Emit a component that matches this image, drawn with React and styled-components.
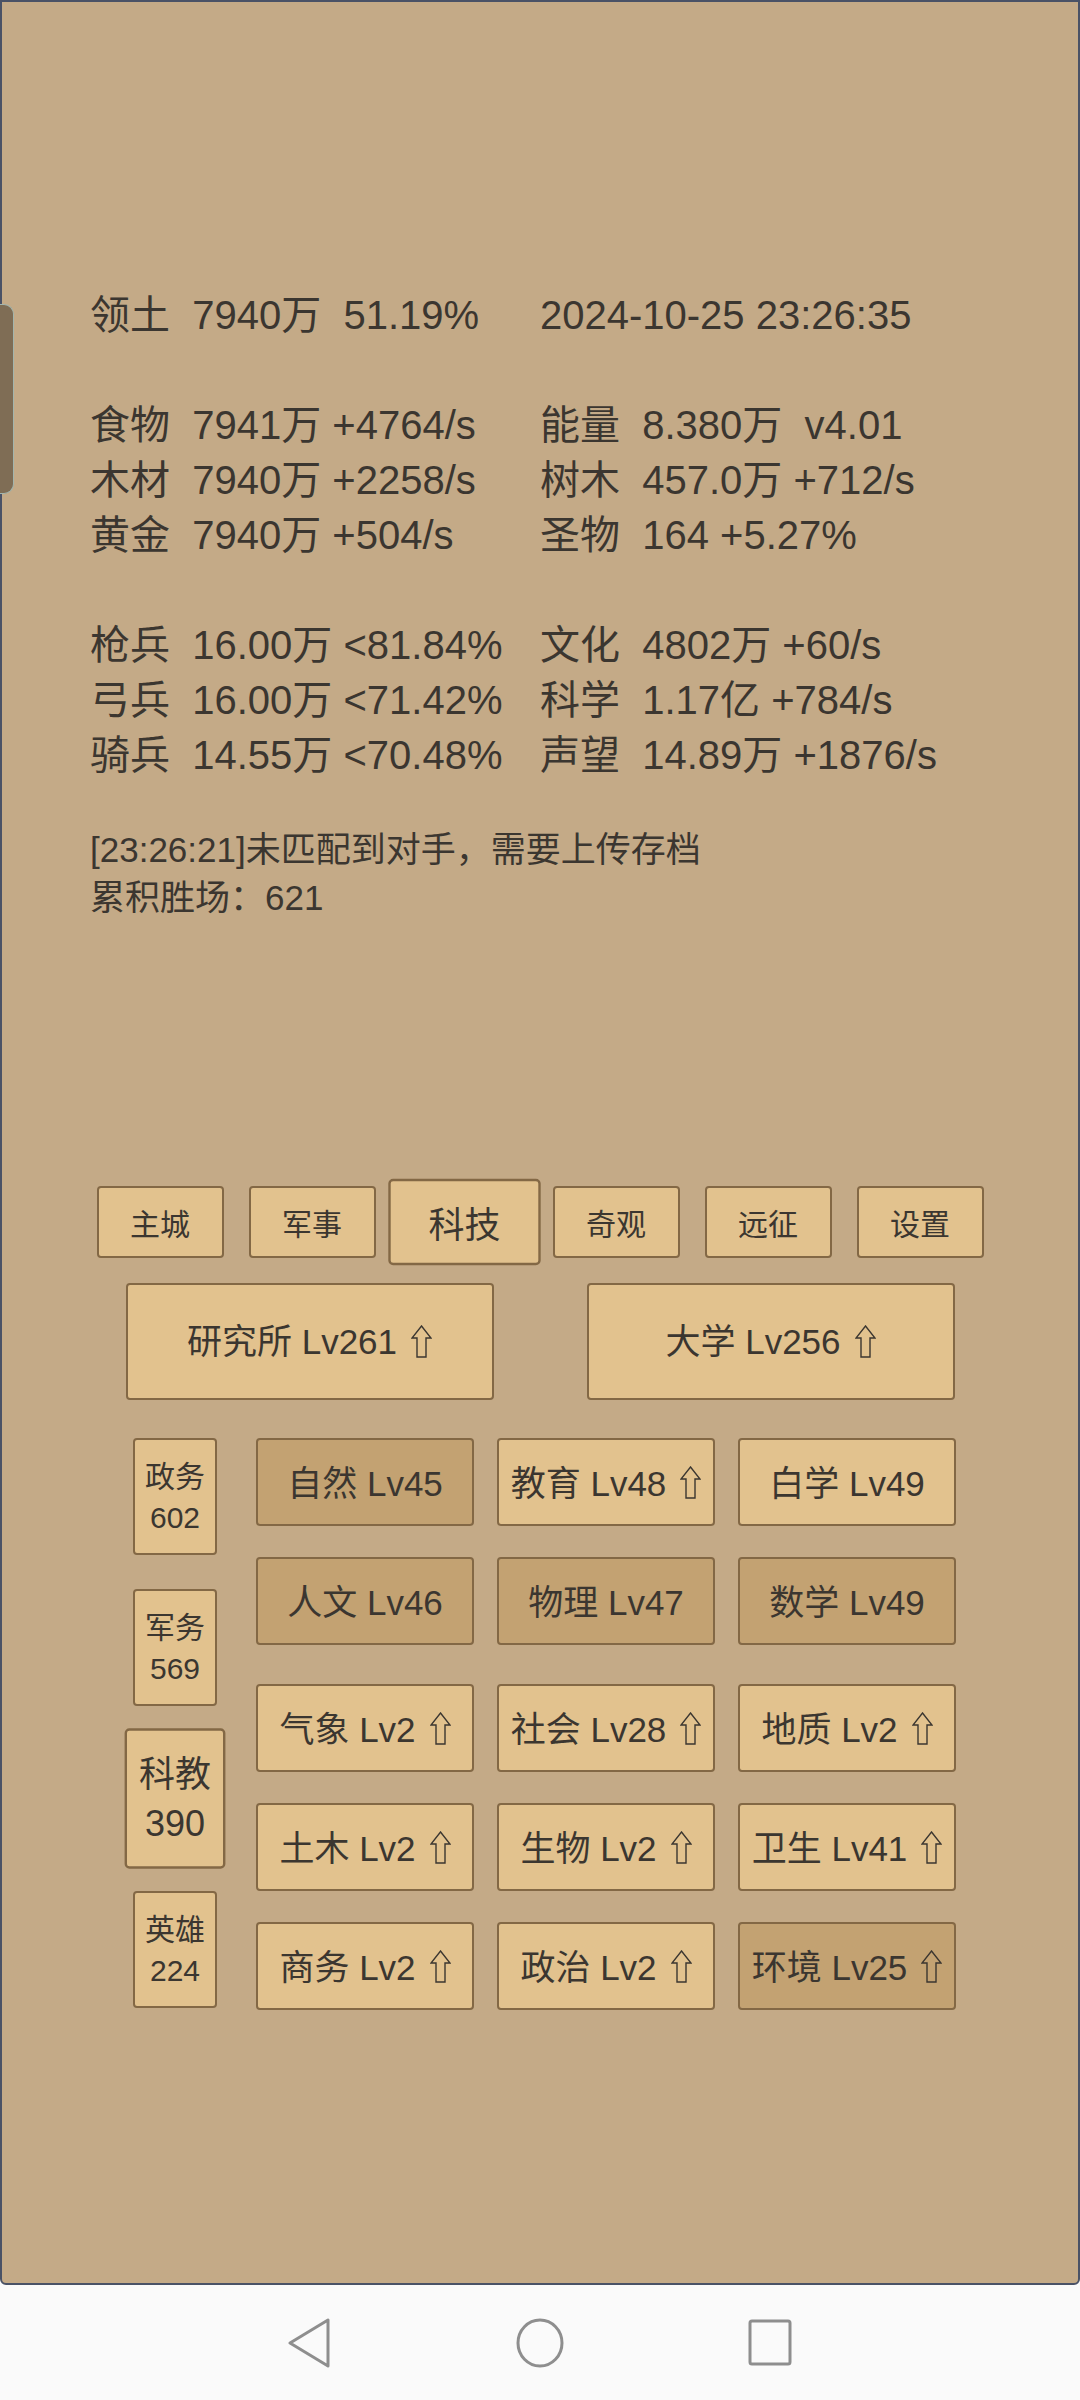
import React from "react";
import styled, { createGlobalStyle } from "styled-components";

const GlobalStyle = createGlobalStyle`
  html, body {
    margin: 0;
    padding: 0;
    background: #fafafa;
  }
  body {
    font-family: "Liberation Sans", "Noto Sans CJK SC", sans-serif;
    color: #3b3630;
  }
`;

const stats = [
  ["领土  7940万  51.19%", "2024-10-25 23:26:35"],
  null,
  ["食物  7941万 +4764/s", "能量  8.380万  v4.01"],
  ["木材  7940万 +2258/s", "树木  457.0万 +712/s"],
  ["黄金  7940万 +504/s", "圣物  164 +5.27%"],
  null,
  ["枪兵  16.00万 <81.84%", "文化  4802万 +60/s"],
  ["弓兵  16.00万 <71.42%", "科学  1.17亿 +784/s"],
  ["骑兵  14.55万 <70.48%", "声望  14.89万 +1876/s"],
];

const tabs = ["主城", "军事", "科技", "奇观", "远征", "设置"];

const sides = [
  { name: "政务", count: 602 },
  { name: "军务", count: 569 },
  { name: "科教", count: 390, active: true },
  { name: "英雄", count: 224 },
];

const groupA = [
  { name: "自然 Lv45", dark: true },
  { name: "教育 Lv48", up: true },
  { name: "白学 Lv49" },
  { name: "人文 Lv46", dark: true },
  { name: "物理 Lv47", dark: true },
  { name: "数学 Lv49", dark: true },
];

const groupB = [
  { name: "气象 Lv2", up: true },
  { name: "社会 Lv28", up: true },
  { name: "地质 Lv2", up: true },
  { name: "土木 Lv2", up: true },
  { name: "生物 Lv2", up: true },
  { name: "卫生 Lv41", up: true },
  { name: "商务 Lv2", up: true },
  { name: "政治 Lv2", up: true },
  { name: "环境 Lv25", up: true, dark: true },
];

const Screen = styled.div`
  width: 1080px;
  height: 2400px;
  display: flex;
  flex-direction: column;
`;

const Panel = styled.div`
  position: relative;
  box-sizing: border-box;
  height: 2285px;
  background: #c4aa87;
  border: 2px solid #4a5266;
  border-radius: 0 0 6px 6px;
  padding-top: 286px;
`;

const Handle = styled.div`
  position: absolute;
  left: -2px;
  top: 302px;
  width: 14px;
  height: 190px;
  box-sizing: border-box;
  background: #7f6d55;
  border: 1px solid #a3b5ad;
  border-left: none;
  border-radius: 0 10px 10px 0;
`;

const Stats = styled.div`
  display: grid;
  grid-template-columns: 450px auto;
  padding-left: 88px;
  font-size: 40px;
  line-height: 55px;
  white-space: pre;
`;

const Blank = styled.div`
  grid-column: 1 / 3;
  height: 55px;
`;

const Log = styled.div`
  margin-top: 43px;
  padding-left: 88px;
  font-size: 35px;
  line-height: 48px;
`;

const Tabs = styled.div`
  margin-top: 264px;
  display: flex;
  justify-content: center;
  gap: 25px;
`;

const Btn = styled.div`
  box-sizing: border-box;
  display: flex;
  flex-direction: column;
  align-items: center;
  justify-content: center;
  background: ${(p) => (p.$dark ? "#c3a272" : "#e2c28e")};
  border: 2px solid #836845;
  border-radius: 4px;
  white-space: pre;
`;

const Tab = styled(Btn)`
  width: 127px;
  height: 72px;
  font-size: 30px;
  transform: ${(p) => (p.$active ? "scale(1.2)" : "none")};
`;

const BigRow = styled.div`
  margin-top: 25px;
  display: flex;
  justify-content: center;
  gap: 93px;
`;

const BigBtn = styled(Btn)`
  flex-direction: row;
  width: 368px;
  height: 117px;
  padding-top: 2px;
  font-size: 35px;
`;

const Lower = styled.div`
  margin-top: 38px;
  display: flex;
  padding-left: 131px;
  gap: 39px;
`;

const SideCol = styled.div`
  display: flex;
  flex-direction: column;
  gap: 34px;
`;

const SideBtn = styled(Btn)`
  width: 84px;
  height: 117px;
  font-size: 30px;
  line-height: 41px;
  transform: ${(p) => (p.$active ? "scale(1.2)" : "none")};
`;

const Groups = styled.div`
  display: flex;
  flex-direction: column;
  gap: 39px;
`;

const Grid = styled.div`
  display: grid;
  grid-template-columns: repeat(3, 218px);
  grid-auto-rows: 88px;
  column-gap: 23px;
  row-gap: 31px;
`;

const Cell = styled(Btn)`
  flex-direction: row;
  padding-top: 4px;
  font-size: 35px;
`;

const LabelText = styled.span`
  display: inline-flex;
  align-items: flex-end;
  line-height: 1.15;
`;

const UpIcon = styled.svg`
  width: 21px;
  height: 33px;
  margin-left: 14px;
  margin-bottom: 5px;
  flex: none;
`;

const Nav = styled.div`
  flex: 1;
  display: flex;
  align-items: center;
  justify-content: center;
  gap: 183px;
  background: #fafafa;
`;

const UpArrow = () => (
  <UpIcon viewBox="0 0 21 33">
    <path
      d="M10.5 1 L20 13 L15 13 L15 32 L6 32 L6 13 L1 13 Z"
      fill="none"
      stroke="#3b3630"
      strokeWidth="1.4"
      strokeLinejoin="miter"
    />
  </UpIcon>
);

const Label = ({ text, up }) => (
  <LabelText>
    <span>{text}</span>
    {up && <UpArrow />}
  </LabelText>
);

export default function App() {
  return (
    <Screen>
      <GlobalStyle />
      <Panel>
        <Handle />
        <Stats>
          {stats.map((row, i) =>
            row ? (
              <React.Fragment key={i}>
                <div>{row[0]}</div>
                <div>{row[1]}</div>
              </React.Fragment>
            ) : (
              <Blank key={i} />
            )
          )}
        </Stats>
        <Log>
          <div>[23:26:21]未匹配到对手，需要上传存档</div>
          <div>累积胜场：621</div>
        </Log>
        <Tabs>
          {tabs.map((t) => (
            <Tab key={t} $active={t === "科技"}>
              {t}
            </Tab>
          ))}
        </Tabs>
        <BigRow>
          <BigBtn>
            <Label text="研究所 Lv261" up />
          </BigBtn>
          <BigBtn>
            <Label text="大学 Lv256" up />
          </BigBtn>
        </BigRow>
        <Lower>
          <SideCol>
            {sides.map((s) => (
              <SideBtn key={s.name} $active={s.active}>
                <div>{s.name}</div>
                <div>{s.count}</div>
              </SideBtn>
            ))}
          </SideCol>
          <Groups>
            <Grid>
              {groupA.map((c) => (
                <Cell key={c.name} $dark={c.dark}>
                  <Label text={c.name} up={c.up} />
                </Cell>
              ))}
            </Grid>
            <Grid>
              {groupB.map((c) => (
                <Cell key={c.name} $dark={c.dark}>
                  <Label text={c.name} up={c.up} />
                </Cell>
              ))}
            </Grid>
          </Groups>
        </Lower>
      </Panel>
      <Nav>
        <svg width="44" height="52" viewBox="0 0 44 52">
          <path
            d="M40 3 L40 49 L2 26 Z"
            fill="none"
            stroke="#8e8e8e"
            strokeWidth="3"
            strokeLinejoin="round"
          />
        </svg>
        <svg width="50" height="52" viewBox="0 0 50 52">
          <ellipse cx="25" cy="26" rx="22" ry="23" fill="none" stroke="#8e8e8e" strokeWidth="3" />
        </svg>
        <svg width="44" height="48" viewBox="0 0 44 48">
          <rect x="2" y="2" width="40" height="43" rx="2" fill="none" stroke="#8e8e8e" strokeWidth="3" />
        </svg>
      </Nav>
    </Screen>
  );
}
